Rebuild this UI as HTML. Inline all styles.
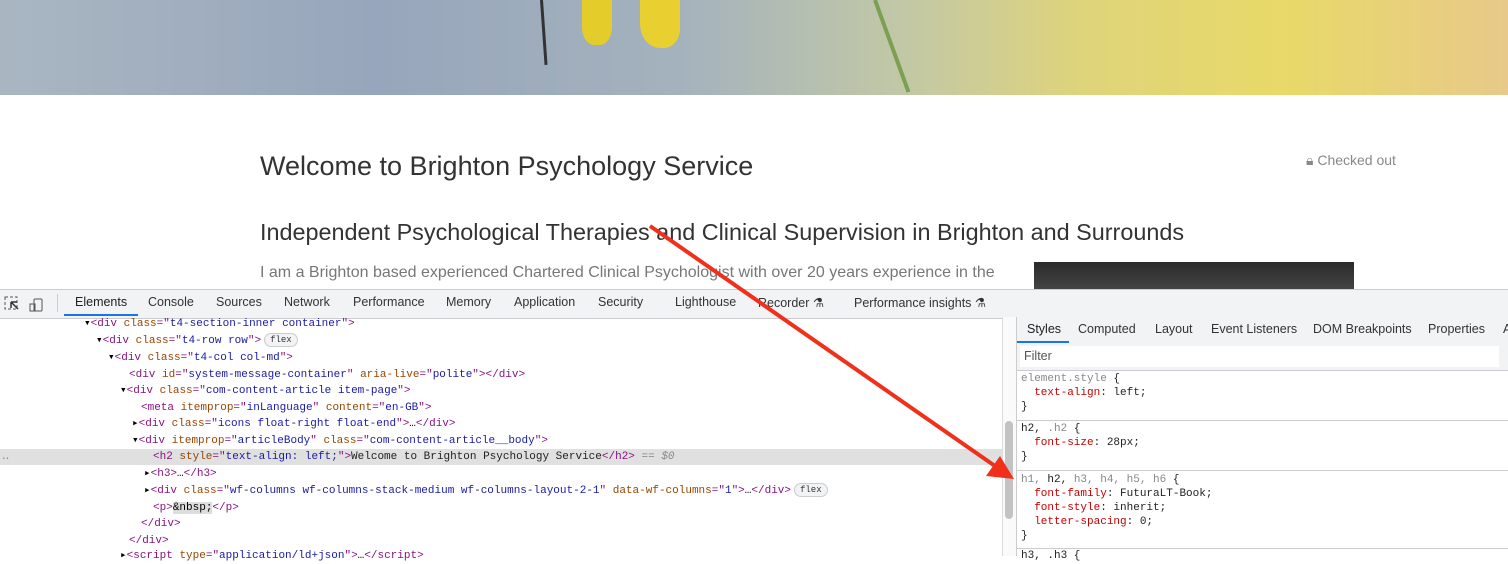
<!DOCTYPE html>
<html><head><style>
body{margin:0;width:1508px;height:556px;overflow:hidden;position:relative;background:#fff;font-family:"Liberation Sans",sans-serif}
.ban{position:absolute;left:0;top:0;width:1508px;height:95px;background:linear-gradient(90deg,#a9b6c2 0%,#97a6bc 25%,#a4b2bd 45%,#c2c8a6 60%,#dfd47a 72%,#e8d968 85%,#e8c98a 100%)}
.t{position:absolute;white-space:nowrap}
.mono{font-family:"Liberation Mono","DejaVu Sans Mono",monospace;font-size:11px}
.tag{color:#881280}.at{color:#994500}.av{color:#1a1aa6}.tx{color:#222}
.row{position:absolute;left:0;width:1002px;height:16px;line-height:16px}
.pill{display:inline-block;border:1px solid #ccc;border-radius:8px;background:#f1f3f4;font-size:9px;padding:0 5px;line-height:12px;color:#333;margin-left:3px;vertical-align:1px}
.tb{font-size:12.5px;color:#333;top:295px}
.st{font-size:12.5px;color:#333;top:322px}
.p{color:#c80000}
</style></head><body>
<div class="ban"></div>
<div style="position:absolute;left:582px;top:0;width:30px;height:45px;border-radius:0 0 40% 40%;background:#e4cc2a"></div>
<div style="position:absolute;left:640px;top:0;width:40px;height:48px;border-radius:0 0 40% 50%;background:#e8d030"></div>
<div style="position:absolute;left:540px;top:0;width:3px;height:65px;background:#333;transform:rotate(-4deg);transform-origin:top"></div>
<div style="position:absolute;left:873px;top:0;width:4px;height:98px;background:#7aa050;transform:rotate(-20deg);transform-origin:top"></div>

<div class="t" style="left:260px;top:151px;font-size:27px;color:#333">Welcome to Brighton Psychology Service</div>
<div class="t" style="left:1306px;top:152px;font-size:14px;color:#888">🔒︎ Checked out</div>
<div class="t" style="left:260px;top:219px;font-size:23.4px;color:#333">Independent Psychological Therapies and Clinical Supervision in Brighton and Surrounds</div>
<div class="t" style="left:260px;top:264px;font-size:16px;color:#777">I am a Brighton based experienced Chartered Clinical Psychologist with over 20 years experience in the</div>
<div style="position:absolute;left:1034px;top:262px;width:320px;height:28px;background:linear-gradient(180deg,#2a2a2a,#444)"></div>

<div style="position:absolute;left:0;top:289px;width:1508px;height:28px;background:#f1f3f4;border-top:1px solid #ccc;border-bottom:1px solid #cbcdd1"></div>
<svg style="position:absolute;left:4px;top:295px" width="44" height="18"><rect x="1" y="2" width="12" height="12" fill="none" stroke="#555" stroke-dasharray="3 2"/><path d="M7 7l7 7M7 7v6M7 7h6" stroke="#333" stroke-width="1.5"/><rect x="30" y="4" width="8" height="12" rx="1" fill="none" stroke="#555"/><rect x="26" y="9" width="5" height="7" fill="none" stroke="#555"/></svg>
<div style="position:absolute;left:57px;top:294px;width:1px;height:18px;background:#ccc"></div>
<div class="t tb" style="left:75px;color:#202124">Elements</div>
<div style="position:absolute;left:64px;top:314px;width:74px;height:2px;background:#1a73e8"></div>
<div class="t tb" style="left:148px">Console</div>
<div class="t tb" style="left:216px">Sources</div>
<div class="t tb" style="left:284px">Network</div>
<div class="t tb" style="left:353px">Performance</div>
<div class="t tb" style="left:446px">Memory</div>
<div class="t tb" style="left:514px">Application</div>
<div class="t tb" style="left:598px">Security</div>
<div class="t tb" style="left:675px">Lighthouse</div>
<div class="t tb" style="left:758px">Recorder ⚗</div>
<div class="t tb" style="left:854px">Performance insights ⚗</div>

<div class="mono">
<div class="row" style="top:316px"><span class="t" style="left:84px">▾<span class="tag">&lt;div </span><span class="at">class</span><span class="tag">="</span><span class="av">t4-section-inner container</span><span class="tag">"&gt;</span></span></div>
<div class="row" style="top:333px"><span class="t" style="left:96px">▾<span class="tag">&lt;div </span><span class="at">class</span><span class="tag">="</span><span class="av">t4-row row</span><span class="tag">"&gt;</span><span class="pill">flex</span></span></div>
<div class="row" style="top:350px"><span class="t" style="left:108px">▾<span class="tag">&lt;div </span><span class="at">class</span><span class="tag">="</span><span class="av">t4-col col-md</span><span class="tag">"&gt;</span></span></div>
<div class="row" style="top:367px"><span class="t" style="left:129px"><span class="tag">&lt;div </span><span class="at">id</span><span class="tag">="</span><span class="av">system-message-container</span><span class="tag">" </span><span class="at">aria-live</span><span class="tag">="</span><span class="av">polite</span><span class="tag">"&gt;&lt;/div&gt;</span></span></div>
<div class="row" style="top:383px"><span class="t" style="left:120px">▾<span class="tag">&lt;div </span><span class="at">class</span><span class="tag">="</span><span class="av">com-content-article item-page</span><span class="tag">"&gt;</span></span></div>
<div class="row" style="top:400px"><span class="t" style="left:141px"><span class="tag">&lt;meta </span><span class="at">itemprop</span><span class="tag">="</span><span class="av">inLanguage</span><span class="tag">" </span><span class="at">content</span><span class="tag">="</span><span class="av">en-GB</span><span class="tag">"&gt;</span></span></div>
<div class="row" style="top:416px"><span class="t" style="left:132px">▸<span class="tag">&lt;div </span><span class="at">class</span><span class="tag">="</span><span class="av">icons float-right float-end</span><span class="tag">"&gt;</span>…<span class="tag">&lt;/div&gt;</span></span></div>
<div class="row" style="top:433px"><span class="t" style="left:132px">▾<span class="tag">&lt;div </span><span class="at">itemprop</span><span class="tag">="</span><span class="av">articleBody</span><span class="tag">" </span><span class="at">class</span><span class="tag">="</span><span class="av">com-content-article__body</span><span class="tag">"&gt;</span></span></div>
<div class="row" style="top:449px;background:#e0e0e0"><span class="t" style="left:2px;color:#888">‥</span><span class="t" style="left:153px"><span class="tag">&lt;h2 </span><span class="at">style</span><span class="tag">="</span><span class="av">text-align: left;</span><span class="tag">"&gt;</span><span class="tx">Welcome to Brighton Psychology Service</span><span class="tag">&lt;/h2&gt;</span> <span style="color:#888">== <i>$0</i></span></span></div>
<div class="row" style="top:466px"><span class="t" style="left:144px">▸<span class="tag">&lt;h3&gt;</span>…<span class="tag">&lt;/h3&gt;</span></span></div>
<div class="row" style="top:483px"><span class="t" style="left:144px">▸<span class="tag">&lt;div </span><span class="at">class</span><span class="tag">="</span><span class="av">wf-columns wf-columns-stack-medium wf-columns-layout-2-1</span><span class="tag">" </span><span class="at">data-wf-columns</span><span class="tag">="</span><span class="av">1</span><span class="tag">"&gt;</span>…<span class="tag">&lt;/div&gt;</span><span class="pill">flex</span></span></div>
<div class="row" style="top:500px"><span class="t" style="left:153px"><span class="tag">&lt;p&gt;</span><span style="background:#ddd">&amp;nbsp;</span><span class="tag">&lt;/p&gt;</span></span></div>
<div class="row" style="top:516px"><span class="t" style="left:141px"><span class="tag">&lt;/div&gt;</span></span></div>
<div class="row" style="top:533px"><span class="t" style="left:129px"><span class="tag">&lt;/div&gt;</span></span></div>
<div class="row" style="top:548px"><span class="t" style="left:120px">▸<span class="tag">&lt;script </span><span class="at">type</span><span class="tag">="</span><span class="av">application/ld+json</span><span class="tag">"&gt;</span>…<span class="tag">&lt;/script&gt;</span></span></div>
</div>

<div style="position:absolute;left:1002px;top:317px;width:14px;height:239px;background:#fafafa;border-left:1px solid #ddd"></div>
<div style="position:absolute;left:1005px;top:421px;width:8px;height:98px;background:#c3c3c3;border-radius:4px"></div>
<div style="position:absolute;left:1016px;top:317px;width:492px;height:239px;background:#fff;border-left:1px solid #ccc"></div>
<div style="position:absolute;left:1017px;top:317px;width:491px;height:26px;background:#f1f3f4;border-bottom:1px solid #cbcdd1"></div>
<div class="t st" style="left:1027px;color:#202124">Styles</div>
<div style="position:absolute;left:1017px;top:341px;width:52px;height:2px;background:#1a73e8"></div>
<div class="t st" style="left:1078px">Computed</div>
<div class="t st" style="left:1155px">Layout</div>
<div class="t st" style="left:1211px">Event Listeners</div>
<div class="t st" style="left:1313px">DOM Breakpoints</div>
<div class="t st" style="left:1428px">Properties</div>
<div class="t st" style="left:1503px">A</div>
<div style="position:absolute;left:1017px;top:343px;width:491px;height:27px;background:#f1f3f4;border-bottom:1px solid #cbcdd1"></div>
<div style="position:absolute;left:1020px;top:346px;width:479px;height:21px;background:#fff"></div>
<div class="t" style="left:1024px;top:349px;font-size:12.5px;color:#555">Filter</div>
<div class="mono" style="position:absolute;left:1021px;top:372px;line-height:14px;color:#222">
<div><span style="color:#888">element.style</span> {</div><div>&nbsp;&nbsp;<span class="p">text-align</span>: left;</div><div>}</div>
</div>
<div style="position:absolute;left:1017px;top:420px;width:491px;height:1px;background:#ccc"></div>
<div class="mono" style="position:absolute;left:1021px;top:422px;line-height:14px;color:#222">
<div>h2, <span style="color:#888">.h2</span> {</div><div>&nbsp;&nbsp;<span class="p">font-size</span>: 28px;</div><div>}</div>
</div>
<div style="position:absolute;left:1017px;top:470px;width:491px;height:1px;background:#ccc"></div>
<div class="mono" style="position:absolute;left:1021px;top:473px;line-height:14px;color:#222">
<div><span style="color:#888">h1,</span> h2, <span style="color:#888">h3, h4, h5, h6</span> {</div><div>&nbsp;&nbsp;<span class="p">font-family</span>: FuturaLT-Book;</div><div>&nbsp;&nbsp;<span class="p">font-style</span>: inherit;</div><div>&nbsp;&nbsp;<span class="p">letter-spacing</span>: 0;</div><div>}</div>
</div>
<div style="position:absolute;left:1017px;top:548px;width:491px;height:1px;background:#ccc"></div>
<div class="mono t" style="left:1021px;top:550px;color:#222">h3, .h3 {</div>

<svg style="position:absolute;left:0;top:0" width="1508" height="556"><line x1="650" y1="226" x2="995" y2="466" stroke="#f0301a" stroke-width="4"/><polygon points="1014,479 986,476 1000,456" fill="#f0301a"/></svg>
</body></html>
